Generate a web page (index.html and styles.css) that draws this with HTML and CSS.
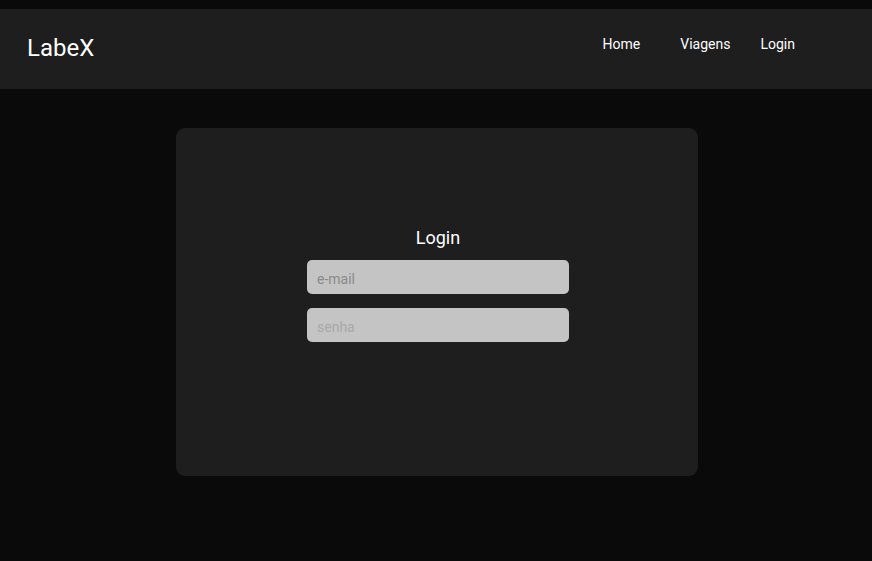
FILE: index.html
```html
<!DOCTYPE html>
<html lang="pt">
<head>
<meta charset="utf-8">
<title>LabeX</title>
<link rel="stylesheet" href="styles.css">
</head>
<body>
<header class="topbar">
  <div class="brand">LabeX</div>
  <nav class="nav">
    <a class="nav-link nav-home" href="#">Home</a>
    <a class="nav-link nav-trips" href="#">Viagens</a>
    <a class="nav-link" href="#">Login</a>
  </nav>
</header>
<main class="page">
  <section class="card">
    <h1 class="card-title">Login</h1>
    <input class="field field-email" type="email" placeholder="e-mail">
    <input class="field field-pass" type="password" placeholder="senha">
  </section>
</main>
</body>
</html>
```

FILE: styles.css
```css
* { box-sizing: border-box; }
html, body {
  margin: 0;
  background: #0a0a0a;
  font-family: Roboto, "Liberation Sans", sans-serif;
  color: #fff;
}
body { padding-top: 9px; min-height: 561px; }
.topbar {
  height: 80px;
  background: #1e1e1e;
  display: flex;
  align-items: center;
  justify-content: space-between;
  padding: 0 77px 2px 27px;
}
.brand {
  font-size: 24px;
  line-height: 28px;
  color: #fff;
}
.nav {
  display: flex;
  align-items: center;
  padding-bottom: 8px;
}
.nav-link {
  color: #fff;
  text-decoration: none;
  font-size: 14px;
  line-height: 16px;
}
.nav-home { margin-right: 40px; }
.nav-trips { margin-right: 30px; }
.page {
  display: flex;
  justify-content: center;
  padding-top: 39px;
}
.card {
  width: 522px;
  height: 348px;
  margin-left: 2px;
  background: #1e1e1e;
  border-radius: 9px;
  display: flex;
  flex-direction: column;
  align-items: center;
  padding: 99px 0 0 2px;
}
.card-title {
  margin: 0 0 11px;
  font-size: 18px;
  line-height: 22px;
  font-weight: 400;
  color: #fff;
}
.field {
  width: 262px;
  height: 34px;
  border: none;
  border-radius: 5px;
  background: #c4c4c4;
  padding: 4px 10px 0;
  font-family: Roboto, "Liberation Sans", sans-serif;
  font-size: 14px;
  outline: none;
}
.field-email { margin-bottom: 14px; }
.field-email::placeholder { color: #8a8a8a; }
.field-pass::placeholder { color: #a8a8a8; }
```
